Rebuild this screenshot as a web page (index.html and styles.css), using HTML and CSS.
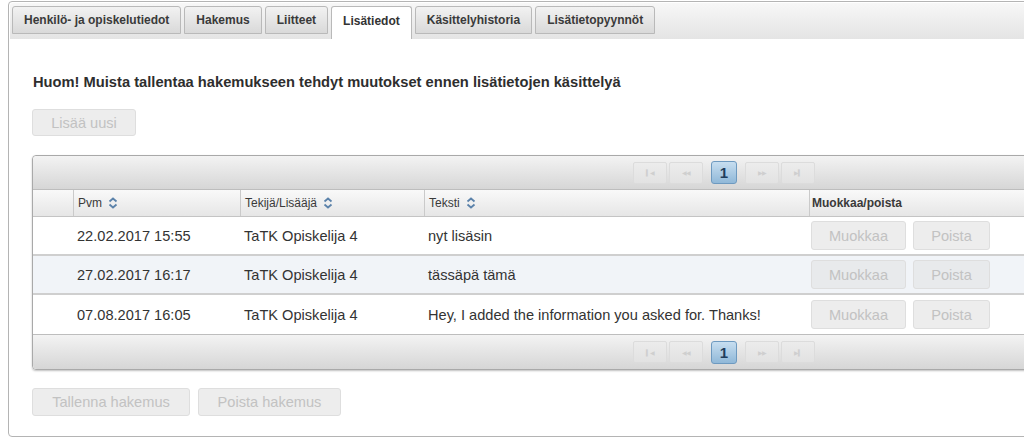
FILE: index.html
```html
<!DOCTYPE html>
<html lang="fi">
<head>
<meta charset="utf-8">
<title>Lisätiedot</title>
<link rel="stylesheet" href="styles.css">
</head>
<body>
<div class="panel">
  <div class="tabbar">
    <div class="tab">Henkilö- ja opiskelutiedot</div>
    <div class="tab">Hakemus</div>
    <div class="tab">Liitteet</div>
    <div class="tab active">Lisätiedot</div>
    <div class="tab">Käsittelyhistoria</div>
    <div class="tab">Lisätietopyynnöt</div>
  </div>
  <div class="content">
    <h2 class="notice">Huom! Muista tallentaa hakemukseen tehdyt muutokset ennen lisätietojen käsittelyä</h2>
    <button class="btn btn-add" disabled>Lisää uusi</button>
    <div class="datatable">
      <div class="pager">
        <span class="pbtn">&#9613;&#9664;</span>
        <span class="pbtn">&#9664;&#9664;</span>
        <span class="page">1</span>
        <span class="pbtn">&#9654;&#9654;</span>
        <span class="pbtn">&#9654;&#9613;</span>
      </div>
      <div class="row head">
        <div class="c c0"></div>
        <div class="c c1">Pvm <svg class="sort" viewBox="0 0 10 12"><path d="M1.5 4.5 L5 1.5 L8.5 4.5 M1.5 7.5 L5 10.5 L8.5 7.5" fill="none" stroke="#5b82aa" stroke-width="1.8"/></svg></div>
        <div class="c c2">Tekijä/Lisääjä <svg class="sort" viewBox="0 0 10 12"><path d="M1.5 4.5 L5 1.5 L8.5 4.5 M1.5 7.5 L5 10.5 L8.5 7.5" fill="none" stroke="#5b82aa" stroke-width="1.8"/></svg></div>
        <div class="c c3">Teksti <svg class="sort" viewBox="0 0 10 12"><path d="M1.5 4.5 L5 1.5 L8.5 4.5 M1.5 7.5 L5 10.5 L8.5 7.5" fill="none" stroke="#5b82aa" stroke-width="1.8"/></svg></div>
        <div class="c c4 bold">Muokkaa/poista</div>
      </div>
      <div class="row">
        <div class="c c0"></div>
        <div class="c c1">22.02.2017 15:55</div>
        <div class="c c2">TaTK Opiskelija 4</div>
        <div class="c c3">nyt lisäsin</div>
        <div class="c c4"><button class="btn sm m" disabled>Muokkaa</button><button class="btn sm p" disabled>Poista</button></div>
      </div>
      <div class="row alt">
        <div class="c c0"></div>
        <div class="c c1">27.02.2017 16:17</div>
        <div class="c c2">TaTK Opiskelija 4</div>
        <div class="c c3">tässäpä tämä</div>
        <div class="c c4"><button class="btn sm m" disabled>Muokkaa</button><button class="btn sm p" disabled>Poista</button></div>
      </div>
      <div class="row">
        <div class="c c0"></div>
        <div class="c c1">07.08.2017 16:05</div>
        <div class="c c2">TaTK Opiskelija 4</div>
        <div class="c c3">Hey, I added the information you asked for. Thanks!</div>
        <div class="c c4"><button class="btn sm m" disabled>Muokkaa</button><button class="btn sm p" disabled>Poista</button></div>
      </div>
      <div class="pager foot">
        <span class="pbtn">&#9613;&#9664;</span>
        <span class="pbtn">&#9664;&#9664;</span>
        <span class="page">1</span>
        <span class="pbtn">&#9654;&#9654;</span>
        <span class="pbtn">&#9654;&#9613;</span>
      </div>
    </div>
    <div class="actions">
      <button class="btn btn-save" disabled>Tallenna hakemus</button>
      <button class="btn btn-del" disabled>Poista hakemus</button>
    </div>
  </div>
</div>
</body>
</html>
```
FILE: styles.css
```css
html, body {
  margin: 0;
  padding: 0;
  overflow: hidden;
  background: #fff;
  width: 1024px;
  height: 442px;
}
body {
  font-family: "Liberation Sans", Arial, sans-serif;
  color: #333;
}
.panel {
  margin: 1px 0 0 8px;
  width: 1040px;
  height: 436px;
  border: 1px solid #b4b4b4;
  border-radius: 4px;
  box-sizing: border-box;
  padding: 1px;
}
.tabbar {
  height: 36px;
  display: flex;
  align-items: flex-start;
  gap: 3px;
  padding: 3px 0 0 2px;
  box-sizing: border-box;
  background: linear-gradient(#f7f7f7, #e4e4e4);
  border-radius: 3px 3px 0 0;
}
.tab {
  height: 28px;
  box-sizing: border-box;
  padding: 0 11px;
  display: flex;
  align-items: center;
  font-size: 12px;
  font-weight: bold;
  color: #3a3a3a;
  border: 1px solid #b9b9b9;
  border-radius: 3px 3px 0 0;
  background: linear-gradient(#f2f2f2, #d9d9d9);
}
.tab.active {
  height: 33px;
  background: #fff;
  border-bottom: none;
  color: #333;
  padding-bottom: 5px;
}
.content {
  padding: 0 0 0 22px;
}
.notice {
  margin: 35px 0 0 1px;
  font-size: 14.7px;
  font-weight: bold;
  color: #2e2e2e;
  line-height: 16px;
}
.btn {
  font-family: "Liberation Sans", Arial, sans-serif;
  font-size: 14.6px;
  color: #c2c2c2;
  background: #ededed;
  border: 1px solid #dedede;
  border-radius: 3px;
  padding: 0;
  box-sizing: border-box;
}
.btn-add {
  display: block;
  margin-top: 19px;
  width: 104px;
  height: 27px;
}
.datatable {
  margin-top: 19px;
  width: 1010px;
  border: 1px solid #a9a9a9;
  border-radius: 4px 0 0 4px;
  box-shadow: 0 1px 2px rgba(0,0,0,0.25);
}
.pager {
  height: 33px;
  display: flex;
  align-items: center;
  padding-left: 600px;
  gap: 2px;
  background: linear-gradient(#f3f3f3, #d6d6d6);
  border-bottom: 1px solid #bdbdbd;
  border-radius: 4px 0 0 0;
}
.pager.foot {
  height: 34px;
  border-bottom: none;
  border-top: 1px solid #bdbdbd;
  border-radius: 0 0 0 4px;
}
.pbtn {
  width: 34px;
  height: 22px;
  box-sizing: border-box;
  border: 1px solid #dcdcdc;
  border-radius: 2px;
  background: linear-gradient(#ececec, #e2e2e2);
  color: #cfcfcf;
  font-size: 6px;
  letter-spacing: -1px;
  display: flex;
  align-items: center;
  justify-content: center;
}
.page {
  width: 26px;
  height: 23px;
  margin: 0 6px 0 6px;
  box-sizing: border-box;
  border: 1px solid #6e9ac0;
  border-radius: 3px;
  background: linear-gradient(#c7def0, #90b8d8);
  color: #1f3d5c;
  font-size: 15px;
  font-weight: bold;
  display: flex;
  align-items: center;
  justify-content: center;
}
.row {
  display: flex;
  height: 39px;
  align-items: center;
  border-bottom: 2px solid #cfcfcf;
  box-sizing: border-box;
  background: #fff;
  font-size: 14.6px;
  color: #333;
}
.row.alt { background: #f1f4f8; }
.row.head {
  height: 27px;
  background: linear-gradient(#f9f9f9, #e6e6e6);
  font-size: 12px;
  color: #3a3a3a;
  border-bottom: 1px solid #c4c4c4;
}
.row:nth-last-child(2) { border-bottom: none; }
.c {
  box-sizing: border-box;
  padding-left: 4px;
  height: 100%;
  display: flex;
  align-items: center;
}
.head .c { border-left: 1px solid #cacaca; }
.head .c0 { border-left: none; }
.c0 { width: 40px; }
.c1 { width: 167px; }
.c2 { width: 184px; }
.c3 { width: 385px; }
.c4 { flex: 1; padding-left: 2px; }
.bold { font-weight: bold; }
.sort { width: 10px; height: 12px; margin-left: 6px; }
.btn.sm {
  height: 29px;
}
.btn.m { width: 95px; }
.btn.p { width: 77px; margin-left: 7px; }
.alt .btn.sm { background: #e8eaec; }
.actions {
  display: flex;
  gap: 8px;
  margin-top: 18px;
}
.btn-save { width: 158px; height: 28px; }
.btn-del { width: 143px; height: 28px; }
```
